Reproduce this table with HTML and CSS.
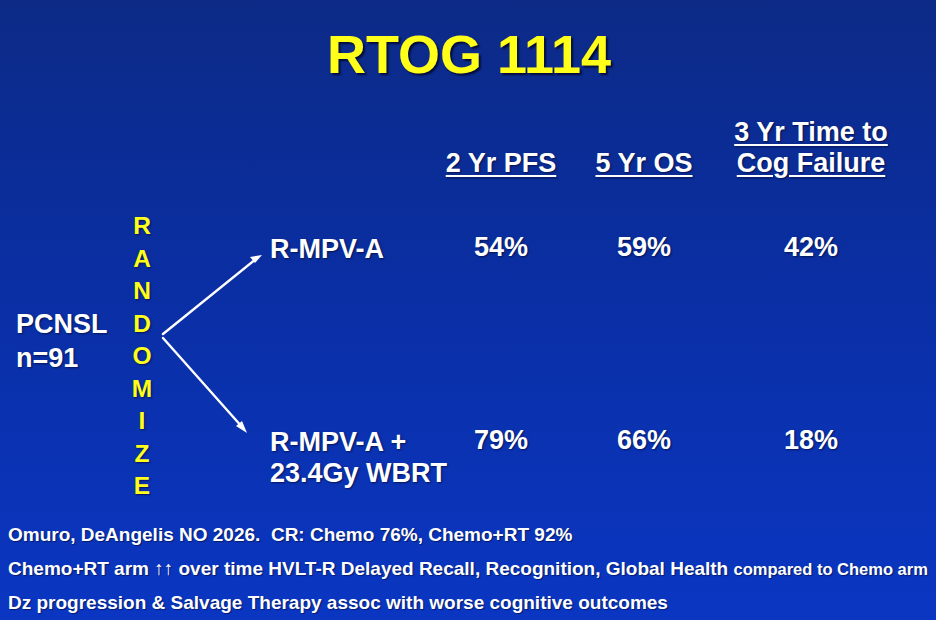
FILE: index.html
```html
<!DOCTYPE html>
<html lang="en">
<head>
<meta charset="utf-8">
<title>RTOG 1114</title>
<link rel="stylesheet" href="styles.css">
</head>
<body>
<div class="slide">
  <h1 class="title">RTOG 1114</h1>

  <div class="diagram">
    <div class="cohort">PCNSL<br>n=91</div>

    <div class="randomize">
      <span>R</span><span>A</span><span>N</span><span>D</span><span>O</span><span>M</span><span>I</span><span>Z</span><span>E</span>
    </div>

    <svg class="arrows" width="112" height="330" viewBox="0 0 112 330">
      <line x1="5" y1="218" x2="98" y2="143" stroke="#fff" stroke-width="2.4" stroke-linecap="round"/>
      <polygon points="104,139 92,141 97,147" fill="#fff"/>
      <line x1="5" y1="222" x2="85" y2="312" stroke="#fff" stroke-width="2.4" stroke-linecap="round"/>
      <polygon points="89,317 84,305 78,310" fill="#fff"/>
    </svg>

    <div class="table">
      <div class="cell head-blank"></div>
      <div class="cell head"><u>2 Yr PFS</u></div>
      <div class="cell head"><u>5 Yr OS</u></div>
      <div class="cell head"><u>3 Yr Time to</u><br><u>Cog Failure</u></div>

      <div class="cell arm row1">R-MPV-A</div>
      <div class="cell val row1">54%</div>
      <div class="cell val row1">59%</div>
      <div class="cell val row1">42%</div>

      <div class="cell arm">R-MPV-A +<br>23.4Gy WBRT</div>
      <div class="cell val">79%</div>
      <div class="cell val">66%</div>
      <div class="cell val">18%</div>
    </div>
  </div>

  <div class="notes">
    <p>Omuro, DeAngelis NO 2026.&nbsp; CR: Chemo 76%, Chemo+RT 92%</p>
    <p>Chemo+RT arm <span class="up">↑↑</span> over time HVLT-R Delayed Recall, Recognition, Global Health <span class="small">compared to Chemo arm</span></p>
    <p>Dz progression &amp; Salvage Therapy assoc with worse cognitive outcomes</p>
  </div>
</div>
</body>
</html>
```

FILE: styles.css
```css
html, body {
  margin: 0;
  padding: 0;
}

body {
  width: 936px;
  height: 620px;
  overflow: hidden;
  background: linear-gradient(to bottom, #0c2a86 0%, #0a2fa6 50%, #0a36c2 100%);
  font-family: "Liberation Sans", Arial, sans-serif;
  font-weight: bold;
  color: #ffffff;
}

.slide {
  width: 936px;
  height: 620px;
  display: flex;
  flex-direction: column;
}

.title {
  margin: 24px 0 0 0;
  height: 60px;
  font-size: 54px;
  line-height: 60px;
  font-weight: bold;
  text-align: center;
  color: #ffff1a;
  text-shadow: 2px 2px 2px rgba(0, 0, 30, 0.75);
  padding-left: 2px;
}

.diagram {
  margin-top: 32px;
  height: 406px;
  display: flex;
  align-items: flex-start;
}

.cohort {
  width: 126px;
  flex: none;
  box-sizing: border-box;
  padding-left: 16px;
  margin-top: 191px;
  font-size: 27px;
  line-height: 34px;
  text-shadow: 1px 1px 2px rgba(0, 0, 30, 0.6);
}

.randomize {
  width: 32px;
  flex: none;
  margin-top: 94px;
  display: flex;
  flex-direction: column;
  align-items: center;
  font-size: 24.5px;
  line-height: 32.5px;
  color: #ffff1a;
  text-shadow: 1px 1px 2px rgba(0, 0, 30, 0.6);
}

.arrows {
  display: block;
  flex: none;
}

.table {
  display: grid;
  grid-template-columns: 167px 128px 158px 176px;
  grid-template-rows: 62.5px 246px auto;
  font-size: 27px;
  line-height: 31px;
  text-shadow: 1px 1px 2px rgba(0, 0, 30, 0.6);
}

.cell {
  white-space: nowrap;
}

.head {
  align-self: end;
  text-align: center;
}

.head u {
  text-decoration: underline;
  text-decoration-thickness: 2px;
  text-underline-offset: 3px;
}

.arm {
  padding-top: 2px;
  padding-left: 0;
}

.val {
  text-align: center;
}

.row1 {
  padding-top: 53px;
}

.arm.row1 {
  padding-top: 55px;
}

.notes {
  padding-left: 8px;
  font-size: 19px;
  line-height: 34px;
  text-shadow: 1px 1px 1px rgba(0, 0, 30, 0.5);
}

.notes p {
  margin: 0;
  white-space: nowrap;
}

.notes .up {
  color: #ffffff;
}

.notes .small {
  font-size: 16.5px;
}
```
